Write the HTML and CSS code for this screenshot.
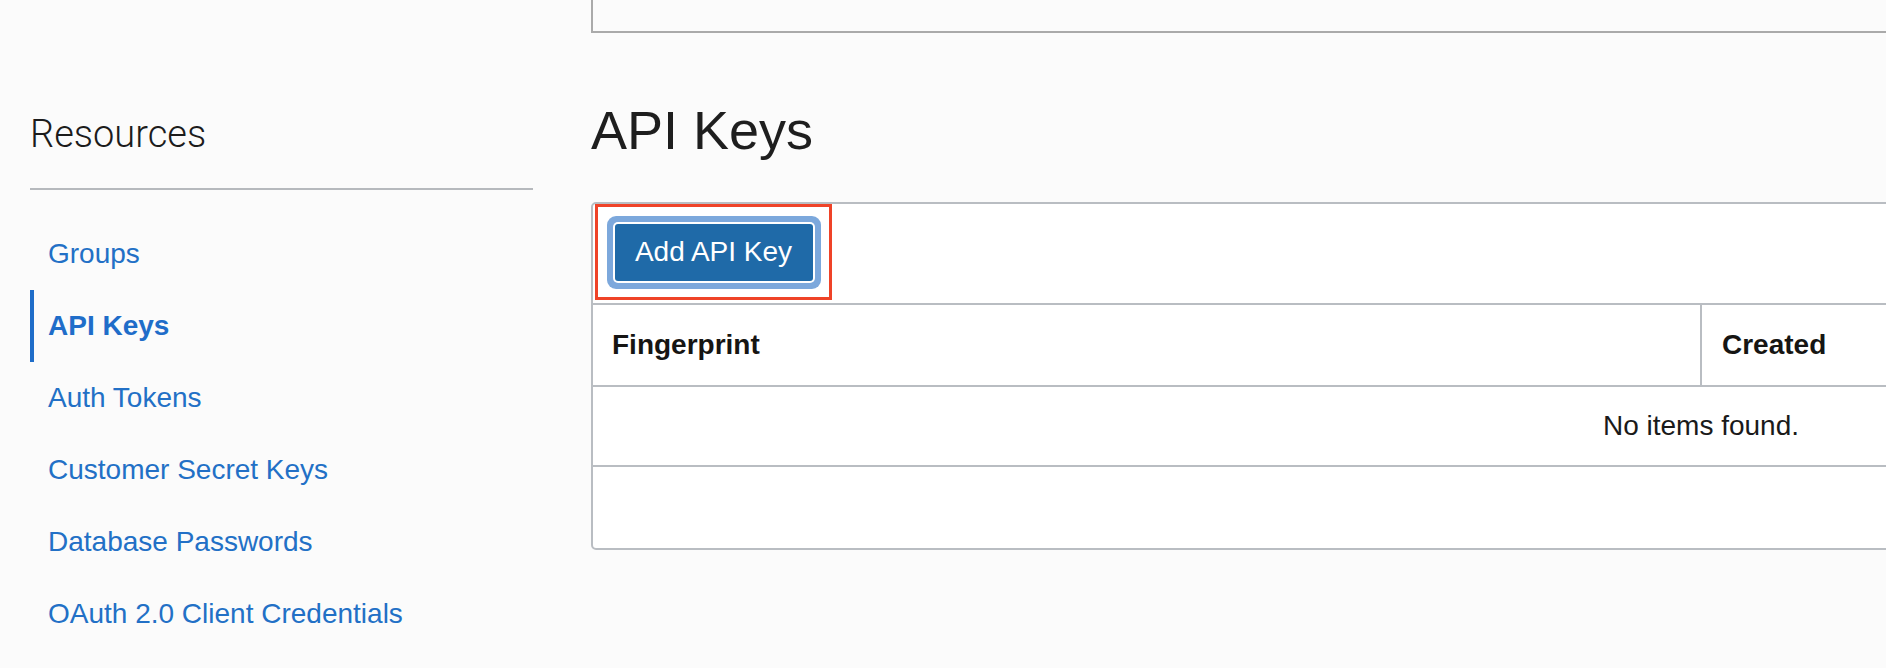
FILE: index.html
```html
<!DOCTYPE html>
<html lang="en">
<head>
<meta charset="utf-8">
<title>API Keys</title>
<link rel="stylesheet" href="styles.css">
</head>
<body>
<div class="page">
  <aside class="sidebar">
    <h2 class="resources-title">Resources</h2>
    <hr class="divider">
    <nav>
      <ul class="nav-list">
        <li class="nav-item"><a href="#">Groups</a></li>
        <li class="nav-item active"><a href="#">API Keys</a></li>
        <li class="nav-item"><a href="#">Auth Tokens</a></li>
        <li class="nav-item"><a href="#">Customer Secret Keys</a></li>
        <li class="nav-item"><a href="#">Database Passwords</a></li>
        <li class="nav-item"><a href="#">OAuth 2.0 Client Credentials</a></li>
      </ul>
    </nav>
  </aside>
  <main class="main">
    <div class="top-box"></div>
    <h1 class="page-title">API Keys</h1>
    <section class="card">
      <div class="toolbar">
        <div class="highlight">
          <button class="btn-primary" type="button">Add API Key</button>
        </div>
      </div>
      <div class="row header-row">
        <div class="cell col-fingerprint">Fingerprint</div>
        <div class="cell col-created">Created</div>
      </div>
      <div class="row empty-row">No items found.</div>
      <div class="card-footer"></div>
    </section>
  </main>
</div>
</body>
</html>
```
FILE: styles.css
```css
html, body {
  margin: 0;
  padding: 0;
}
body {
  background: #fbfbfb;
  font-family: "Liberation Sans", Arial, sans-serif;
  color: #161513;
  overflow: hidden;
  height: 668px;
}
.page {
  display: flex;
  align-items: flex-start;
  gap: 58px;
}
.sidebar {
  flex: 0 0 503px;
  padding-left: 30px;
}
.resources-title {
  margin: 116px 0 0;
  font-family: "Roboto", "Liberation Sans", sans-serif;
  font-weight: 300;
  font-size: 38px;
  line-height: 36px;
  color: #1c1c1c;
}
.divider {
  margin: 36px 0 0;
  border: 0;
  height: 2px;
  background: #b6b9bd;
}
.nav-list {
  list-style: none;
  margin: 28px 0 0;
  padding: 0;
}
.nav-item {
  height: 72px;
  line-height: 72px;
  padding-left: 18px;
  font-size: 28px;
}
.nav-item a {
  color: #2270c6;
  text-decoration: none;
}
.nav-item.active {
  border-left: 4px solid #1f6dc9;
  padding-left: 14px;
}
.nav-item.active a {
  font-weight: bold;
  color: #1f6dc9;
}
.main {
  flex: 1 1 auto;
  min-width: 0;
  overflow: hidden;
}
.top-box {
  width: 1400px;
  height: 31px;
  border-left: 2px solid #aaaaaa;
  border-bottom: 2px solid #aaaaaa;
}
.page-title {
  margin: 70px 0 0;
  font-size: 54px;
  line-height: 54px;
  font-weight: normal;
  color: #1e1e1e;
}
.card {
  margin-top: 45px;
  width: 2216px;
  background: #ffffff;
  border: 2px solid #b9bdc2;
  border-radius: 5px;
}
.toolbar {
  height: 99px;
  border-bottom: 2px solid #b9bdc2;
}
.highlight {
  margin-left: 2px;
  width: 231px;
  height: 90px;
  border: 3px solid #ef4328;
  display: flex;
  align-items: center;
  justify-content: center;
}
.btn-primary {
  width: 198px;
  height: 57px;
  padding: 0;
  border: 0;
  border-radius: 3px;
  background: #1f6aa8;
  color: #ffffff;
  font-family: "Liberation Sans", Arial, sans-serif;
  font-size: 28px;
  box-shadow: 0 0 0 2px #ffffff, 0 0 0 8px #7ca8dc;
}
.row {
  border-bottom: 2px solid #b9bdc2;
  font-size: 28px;
}
.header-row {
  display: flex;
  height: 80px;
  line-height: 80px;
  font-weight: bold;
}
.cell {
  padding-left: 19px;
}
.col-fingerprint {
  width: 1088px;
  border-right: 2px solid #b9bdc2;
}
.col-created {
  padding-left: 20px;
}
.empty-row {
  height: 78px;
  line-height: 78px;
  text-align: center;
  color: #1a1a1a;
}
.card-footer {
  height: 81px;
}
```
